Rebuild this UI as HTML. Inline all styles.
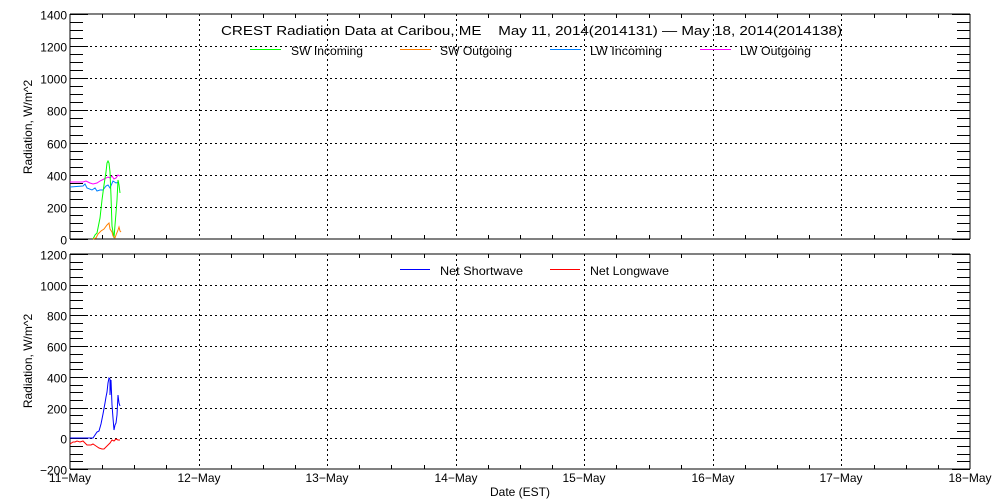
<!DOCTYPE html>
<html><head><style>
html,body{margin:0;padding:0;background:#fff;}
svg{display:block;font-family:"Liberation Sans",sans-serif;}
</style></head><body>
<svg id="s" width="1000" height="500" viewBox="0 0 1000 500" xmlns="http://www.w3.org/2000/svg">
<g id="g" stroke="#000" stroke-width="1" fill="none" shape-rendering="crispEdges"></g>
<g font-size="12" fill="#000">
<text x="221" y="35" font-size="13" textLength="621" lengthAdjust="spacingAndGlyphs" xml:space="preserve">CREST Radiation Data at Caribou, ME    May 11, 2014(2014131) — May 18, 2014(2014138)</text>
<text x="291" y="55" textLength="72" lengthAdjust="spacingAndGlyphs">SW Incoming</text>
<text x="440" y="55" textLength="72" lengthAdjust="spacingAndGlyphs">SW Outgoing</text>
<text x="590" y="55" textLength="72" lengthAdjust="spacingAndGlyphs">LW Incoming</text>
<text x="740" y="55" textLength="71" lengthAdjust="spacingAndGlyphs">LW Outgoing</text>
<text x="440" y="275" textLength="83" lengthAdjust="spacingAndGlyphs">Net Shortwave</text>
<text x="590" y="275" textLength="79" lengthAdjust="spacingAndGlyphs">Net Longwave</text>
<text x="520" y="496" text-anchor="middle">Date (EST)</text>
<text transform="translate(32,127) rotate(-90)" text-anchor="middle">Radiation, W/m^2</text>
<text transform="translate(32,361) rotate(-90)" text-anchor="middle">Radiation, W/m^2</text>
<g id="lab" text-anchor="end"></g>
<g id="xl" text-anchor="middle"></g>
</g>
<g stroke-width="1" fill="none">
<line x1="250" y1="49.5" x2="281" y2="49.5" stroke="#00ff00"/>
<line x1="400" y1="49.5" x2="431" y2="49.5" stroke="#ff8000"/>
<line x1="550" y1="49.5" x2="581" y2="49.5" stroke="#0080ff"/>
<line x1="700" y1="49.5" x2="731" y2="49.5" stroke="#ff00ff"/>
<line x1="400" y1="269.5" x2="430" y2="269.5" stroke="#0000ff"/>
<line x1="550" y1="269.5" x2="580" y2="269.5" stroke="#ff0000"/>
<polyline stroke="#ff00ff" points="70,182 83,182 86,181 90,183 93,184 97,183 100,181 104,179 108,177 110,178 112,176 114,179 116,178 118,175 120,176"/>
<polyline stroke="#0080ff" points="70,187 83,186 85,184 87,188 92,190 95,188 97,191 100,190 103,190 106,186 108,185 110,188 113,181 116,183 119,182"/>
<polyline stroke="#00ff00" points="93,239 95,235 97,233 100,218 102,200 104,185 106,172 107,163 108,161 109,163 110,172 111,196 112,226 114,238 115,225 116,213 117,200 118,180 119,185 120,193"/>
<polyline stroke="#ff8000" points="93,239 96,238 98,234 101,231 104,229 107,225 109,223 110,229 112,232 113,236 115,238 116,235 118,230 119,227 120,231 121,232"/>
<polyline stroke="#0000ff" points="70,438 93,438 95,435 97,432 99,431 101,424 103,414 105,403 106,397 107,392 108,383 109,378 110,379 110,395 111,380 112,405 113,418 114,430 115,425 116,423 117,415 118,395 119,403 120,406"/>
<polyline stroke="#ff0000" points="70,444 73,442 75,442 77,441 80,442 83,441 85,443 87,445 91,445 93,444 96,446 99,448 102,449 104,449 106,447 108,445 110,443 112,440 114,441 116,439 118,440 120,440"/>
</g>
</svg>
<script>
var NS="http://www.w3.org/2000/svg",g=document.getElementById('g'),lab=document.getElementById('lab'),xl=document.getElementById('xl');
function L(x1,y1,x2,y2,d){var l=document.createElementNS(NS,'line');l.setAttribute('x1',x1);l.setAttribute('y1',y1);l.setAttribute('x2',x2);l.setAttribute('y2',y2);if(d)l.setAttribute('stroke-dasharray','2,3');g.appendChild(l);}
function T(p,x,y,s){var t=document.createElementNS(NS,'text');t.setAttribute('x',x);t.setAttribute('y',y);t.textContent=s;p.appendChild(t);}
var X0=70,X1=970,dx=900/7;
function plot(top,bot,vmin,vmax){
 var sc=(bot-top)/(vmax-vmin);
 L(X0,top,X1,top);L(X0,bot,X1,bot);L(X0,top,X0,bot);L(X1,top,X1,bot);
 for(var v=vmin;v<=vmax;v+=50){var y=Math.round(bot-(v-vmin)*sc)+0.5;
  var maj=(v%200==0);
  if(maj){ if(v>vmin&&v<vmax){L(X0,y,X1,y,true);} L(X0,y,X0+18,y);L(X1-18,y,X1,y);T(lab,67,y+5,String(v).replace('-','\u2212'));}
  else{L(X0,y,X0+13,y);L(X1-13,y,X1,y);}
 }
 for(var i=0;i<=28;i++){var x=Math.round(X0+i*dx/4)+0.5;
  if(i%4==0){ if(i>0&&i<28)L(x,top,x,bot,true);}
  else{L(x,top,x,top+4);L(x,bot-4,x,bot);}
 }
}
plot(14,239,0,1400);
plot(254,469,-200,1200);
var days=['11','12','13','14','15','16','17','18'];
for(var i=0;i<8;i++)T(xl,Math.round(X0+i*dx),482,days[i]+'\u2212May');
</script>
</body></html>
